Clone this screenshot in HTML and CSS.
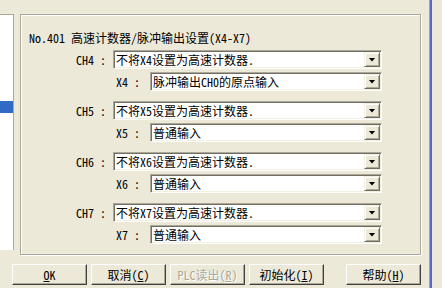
FILE: index.html
```html
<!DOCTYPE html>
<html>
<head>
<meta charset="utf-8">
<link rel="stylesheet" href="styles.css">
</head>
<body>
<div class="screen">
  <div class="main">
    <div class="top">
      <div class="pane"><div class="sel"></div></div>
      <div class="group">
        <div class="title">No.401 高速计数器/脉冲输出设置(X4-X7)</div>
        <div class="sets">
          <div class="set">
            <div class="row ch"><span class="lbl">CH4 :</span><div class="combo"><span class="val">不将X4设置为高速计数器.</span><span class="drop"><i></i></span></div></div>
            <div class="row x"><span class="lbl">X4 :</span><div class="combo"><span class="val">脉冲输出CH0的原点输入</span><span class="drop"><i></i></span></div></div>
          </div>
          <div class="set">
            <div class="row ch"><span class="lbl">CH5 :</span><div class="combo"><span class="val">不将X5设置为高速计数器.</span><span class="drop"><i></i></span></div></div>
            <div class="row x"><span class="lbl">X5 :</span><div class="combo"><span class="val">普通输入</span><span class="drop"><i></i></span></div></div>
          </div>
          <div class="set">
            <div class="row ch"><span class="lbl">CH6 :</span><div class="combo"><span class="val">不将X6设置为高速计数器.</span><span class="drop"><i></i></span></div></div>
            <div class="row x"><span class="lbl">X6 :</span><div class="combo"><span class="val">普通输入</span><span class="drop"><i></i></span></div></div>
          </div>
          <div class="set">
            <div class="row ch"><span class="lbl">CH7 :</span><div class="combo"><span class="val">不将X7设置为高速计数器.</span><span class="drop"><i></i></span></div></div>
            <div class="row x"><span class="lbl">X7 :</span><div class="combo"><span class="val">普通输入</span><span class="drop"><i></i></span></div></div>
          </div>
        </div>
      </div>
    </div>
    <div class="buttons">
      <div class="btn"><span><u>O</u>K</span></div>
      <div class="btn"><span>取消(<u>C</u>)</span></div>
      <div class="btn disabled"><span>PLC读出(<u>R</u>)</span></div>
      <div class="btn"><span>初始化(<u>I</u>)</span></div>
      <div class="btn help"><span>帮助(<u>H</u>)</span></div>
    </div>
  </div>
  <div class="edge"></div>
</div>
</body>
</html>
```
FILE: styles.css
```css
body {
  margin: 0;
  background: #ECE9D8;
  font: 12px/19px "Noto Sans Mono CJK SC", "Noto Sans CJK SC", sans-serif;
  color: #000;
}
.screen {
  display: flex;
  width: 442px;
  height: 288px;
  overflow: hidden;
}
.main {
  width: 429px;
  display: flex;
  flex-direction: column;
  padding-top: 14px;
  box-sizing: border-box;
}
.top {
  display: flex;
  align-items: flex-start;
}
.pane {
  width: 13px;
  height: 235px;
  background: #fff;
  border-top: 1px solid #ACA899;
  border-right: 1px solid #ACA899;
}
.sel {
  margin-top: 86px;
  height: 12px;
  background: #316AC5;
}
.group {
  margin-left: 6px;
  width: 401px;
  height: 241px;
  box-sizing: border-box;
  border: 1px solid #ACA899;
  box-shadow: inset 1px 1px 0 #fff, 1px 1px 0 #fff;
  padding-top: 13px;
}
.title {
  padding-left: 8px;
  white-space: nowrap;
}
.sets {
  margin-top: 3px;
  display: flex;
  flex-direction: column;
  gap: 10px;
}
.set {
  display: flex;
  flex-direction: column;
  gap: 3px;
}
.row {
  display: flex;
  align-items: center;
  height: 19px;
}
.lbl {
  text-align: right;
  white-space: pre;
}
.ch .lbl { width: 85px; margin-right: 7px; }
.ch .combo { width: 269px; }
.x .lbl { width: 119px; margin-right: 10px; }
.x .combo { width: 232px; }
.combo {
  height: 19px;
  box-sizing: border-box;
  display: flex;
  padding: 1px;
  background: #fff;
  border: 1px solid;
  border-color: #ACA899 #fff #fff #ACA899;
  box-shadow: inset 1px 1px 0 #716F64, inset -1px -1px 0 #F1EFE2;
}
.val {
  flex: 1;
  padding-left: 1px;
  line-height: 15px;
  white-space: nowrap;
  overflow: hidden;
}
.drop {
  width: 16px;
  height: 15px;
  box-sizing: border-box;
  background: #ECE9D8;
  border: 1px solid;
  border-color: #F1EFE2 #716F64 #716F64 #F1EFE2;
  box-shadow: inset 1px 1px 0 #fff, inset -1px -1px 0 #ACA899;
  display: flex;
  align-items: center;
  justify-content: center;
}
.drop i {
  display: block;
  width: 7px;
  height: 4px;
  background: #000;
  clip-path: polygon(0 0, 100% 0, 50% 100%);
}
.buttons {
  margin-top: 9px;
  padding-left: 12px;
  display: flex;
  gap: 4px;
}
.btn {
  width: 75px;
  height: 21px;
  box-sizing: border-box;
  border: 1px solid;
  border-color: #fff #404040 #404040 #fff;
  box-shadow: inset -1px -1px 0 #ACA899;
  background: #ECE9D8;
  display: flex;
  align-items: center;
  justify-content: center;
  white-space: nowrap;
}
.disabled {
  color: #ACA899;
  text-shadow: 1px 1px 0 #fff;
}
.help { margin-left: 18px; }
.edge {
  width: 3px;
  background: linear-gradient(90deg, #A6B2E6, #5C6FD2, #4A5DC8);
}
```
